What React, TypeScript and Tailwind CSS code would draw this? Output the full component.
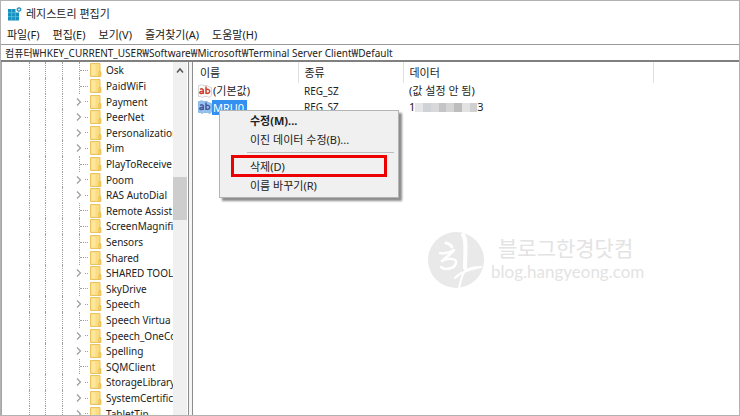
import clsx from 'clsx'

type TreeKey = { name: string; expandable?: boolean }

const TREE_KEYS: TreeKey[] = [
  { name: 'Osk' },
  { name: 'PaidWiFi' },
  { name: 'Payment', expandable: true },
  { name: 'PeerNet', expandable: true },
  { name: 'Personalization', expandable: true },
  { name: 'Pim', expandable: true },
  { name: 'PlayToReceive' },
  { name: 'Poom', expandable: true },
  { name: 'RAS AutoDial', expandable: true },
  { name: 'Remote Assist' },
  { name: 'ScreenMagnifi' },
  { name: 'Sensors' },
  { name: 'Shared' },
  { name: 'SHARED TOOL', expandable: true },
  { name: 'SkyDrive' },
  { name: 'Speech', expandable: true },
  { name: 'Speech Virtua' },
  { name: 'Speech_OneCo', expandable: true },
  { name: 'Spelling', expandable: true },
  { name: 'SQMClient' },
  { name: 'StorageLibrary', expandable: true },
  { name: 'SystemCertific', expandable: true },
  { name: 'TabletTip', expandable: true },
]

const MENUS = ['파일(F)', '편집(E)', '보기(V)', '즐겨찾기(A)', '도움말(H)']

const MASK_COLORS = [
  'bg-[#e4e6e8]',
  'bg-[#cfd2d6]',
  'bg-[#d8d8da]',
  'bg-[#c4c4c6]',
  'bg-[#d4d4d4]',
  'bg-[#bdbdbd]',
  'bg-[#e2e2e2]',
  'bg-[#d0d0d0]',
]

function AppIcon() {
  return (
    <svg width="14" height="14" viewBox="0 0 14 14" aria-hidden="true">
      <path d="M0 2h7.500v3.500h3.500V13.500H0z" fill="#1590bf" />
      <path d="M3.700 2v11.500M7.400 5.500v8M0 5.700h7.500M0 9.600h11" stroke="#63c5e4" strokeWidth="0.700" />
      <path d="M11 0l2.300 1.200v2.500L11 5 8.700 3.700V1.200z" fill="#2b8fb8" />
      <path d="M11 1.500l1.100.5v1.100l-1.100.6-1.100-.6V2z" fill="#b9e6f4" />
    </svg>
  )
}

function FolderIcon() {
  return (
    <svg width="12" height="14" viewBox="0 0 12 14" className="shrink-0" aria-hidden="true">
      <path d="M0.500 0.500h9.500v13H0.500z" fill="#fbdc80" stroke="#e9c45f" />
      <path d="M1.500 1.500h4v11h-4z" fill="#fee69c" />
      <path d="M9.500 8l1.500 1v4.500H8.800V9.500z" fill="#f7cf62" stroke="#dfb44a" strokeWidth="0.600" />
    </svg>
  )
}

function StringIcon({ selected }: { selected?: boolean }) {
  return (
    <svg width="14" height="14" viewBox="0 0 14 14" className="shrink-0" aria-hidden="true">
      <path
        d="M0.500 1.500h1.500l1.500-1 1.500 1h4l1.500 1 3 1v8.500l-1.500 1.500-2.500-1H5.500l-1.500 1-1.500-1h-2z"
        fill={selected ? '#94c3ef' : '#fbfbfb'}
        stroke={selected ? '#7fb0e0' : '#cbcbcb'}
        strokeWidth="0.800"
      />
      <g fill="none" stroke={selected ? '#4a5a9c' : '#cf4330'} strokeWidth="1.500">
        <path d="M2 5.300c1.600-.8 3.300-.5 3.300.9v3.700M5.300 7.200c-2.200 0-3.500.3-3.500 1.300 0 1.500 2.700 1.400 3.500 0" />
        <path d="M8 2.500v7.400M8 6.200c1.200-1.500 3.700-1.100 3.700 1.100s-2.500 2.700-3.700 1.300" />
      </g>
    </svg>
  )
}

function TreeRow({ name, expandable }: TreeKey) {
  return (
    <li className="flex h-4 shrink-0 nth-[5n+3]:h-[15px] nth-[5n]:h-[15px]">
      <span className="w-[17px] shrink-0 border-r border-dotted border-[#a0a0a0]" />
      <span className="w-4 shrink-0 border-r border-dotted border-[#a0a0a0]" />
      <span className="w-[17px] shrink-0 border-r border-dotted border-[#a0a0a0]" />
      {expandable ? (
        <span className="flex w-[26px] shrink-0 items-center justify-between pr-px pl-[13px]">
          <button type="button" aria-label={`${name} 확장`}>
            <svg width="6" height="8" viewBox="0 0 6 8" fill="none" stroke="#9c9c9c" strokeWidth="1.200">
              <path d="M1 0.500L4.500 4L1 7.500" />
            </svg>
          </button>
          <span className="w-[3px] border-t border-dotted border-[#a0a0a0]" />
        </span>
      ) : (
        <span className="flex w-[26px] shrink-0 items-center pl-4">
          <span className="self-stretch border-r border-dotted border-[#a0a0a0]" />
          <span className="w-2 border-t border-dotted border-[#a0a0a0]" />
        </span>
      )}
      <span className="flex min-w-0 flex-1 items-center gap-1 pl-px whitespace-nowrap">
        <FolderIcon />
        <span>{name}</span>
      </span>
    </li>
  )
}

function ContextMenu() {
  return (
    <div
      role="menu"
      className="absolute top-[11px] left-[26px] z-10 flex w-[180px] flex-col border border-[#b4b4b4] bg-[#f0f0f0] pb-0.5 text-[11px] shadow-[3px_3px_2px_rgba(0,0,0,0.45)]"
    >
      <MenuItem label="수정(M)..." bold />
      <MenuItem label="이진 데이터 수정(B)..." />
      <hr className="mt-[3px] mr-1 mb-1 ml-[27px] border-[#bdbdbd]" />
      <MenuItem label="삭제(D)" highlighted />
      <MenuItem label="이름 바꾸기(R)" />
    </div>
  )
}

function MenuItem({ label, bold, highlighted }: { label: string; bold?: boolean; highlighted?: boolean }) {
  return (
    <button
      type="button"
      role="menuitem"
      className={clsx('relative flex h-[19px] items-center pl-[30px] text-left', bold && 'font-bold')}
    >
      {label}
      {highlighted && (
        <span className="absolute -top-[2px] right-[11px] -bottom-px left-[11px] border-3 border-[#ec0000]" />
      )}
    </button>
  )
}

function Watermark() {
  return (
    <div className="pointer-events-none absolute top-[169px] left-[234px] flex items-center gap-[6px] text-[#e3e3e3]">
      <svg width="58" height="58" viewBox="0 0 58 58" aria-hidden="true">
        <circle cx="29" cy="29" r="28" fill="#e9e9e9" />
        <g fill="none" stroke="#fff" strokeLinecap="round" strokeLinejoin="round">
          <path d="M19 12c2 0 5 2 6 4" strokeWidth="3" />
          <path d="M13 22c5 1 11-1 14-3-2 4-9 7-12 11 5-3 14-3 14 1 0 6-10 9-15 5" strokeWidth="2.500" />
          <path d="M36 4c4 4 2 18 2 33" strokeWidth="4" />
          <path d="M28 47c5-6 16-9 26-11-8 0-12 1-16 4-3 3-4 8-6 17" strokeWidth="2" />
        </g>
      </svg>
      <div className="flex flex-col">
        <span className="pl-[7px] text-[21px] leading-6">블로그한경닷컴</span>
        <span className="font-['Lato','Noto_Sans_CJK_KR',sans-serif] text-[17px] leading-6">blog.hangyeong.com</span>
      </div>
    </div>
  )
}

export default function App() {
  return (
    <div className="flex h-screen flex-col overflow-hidden border border-[#b2b2b2] bg-white font-['Noto_Sans','Noto_Sans_CJK_KR',sans-serif] text-[11px] leading-4 text-[#222]">
      <header className="flex h-[25px] shrink-0 items-center gap-1 pl-[7px]">
        <AppIcon />
        <h1>레지스트리 편집기</h1>
      </header>

      <nav className="flex h-[18px] shrink-0 items-center gap-[13px] pl-[6px]">
        {MENUS.map((menu) => (
          <button key={menu} type="button">
            {menu}
          </button>
        ))}
      </nav>

      <input
        type="text"
        aria-label="주소"
        readOnly
        value="컴퓨터₩HKEY_CURRENT_USER₩Software₩Microsoft₩Terminal Server Client₩Default"
        className="h-[18px] shrink-0 border-t border-b-2 border-t-[#999] border-b-[#808080] pl-1 text-[10px] outline-none"
      />

      <div className="flex min-h-0 flex-1 bg-[#f5f5f5]">
        <aside className="flex w-[188px] shrink-0 border-r border-l border-r-[#8c8c8c] border-l-[#a5a5a5] bg-white">
          <ul className="min-w-0 flex-1 overflow-hidden pl-[11px] text-[10px]">
            {TREE_KEYS.map((key) => (
              <TreeRow key={key.name} {...key} />
            ))}
          </ul>
          <div className="flex w-[14px] shrink-0 flex-col items-center bg-[#f0f0f0]">
            <svg width="8" height="16" viewBox="0 0 8 16" fill="none" stroke="#555" strokeWidth="1.500" aria-hidden="true">
              <path d="M1 10.500L4 7L7 10.500" />
            </svg>
            <div className="mt-[99px] h-[43px] w-full bg-[#cdcdcd]" />
          </div>
          <div className="w-px" />
        </aside>

        <main className="relative ml-[3px] min-w-0 flex-1 border-l border-[#8c8c8c] bg-white">
          <table className="w-full table-fixed text-left">
            <thead>
              <tr className="h-[21px]">
                <th className="w-[105px] border-r border-[#e0e0e0] pl-[7px] font-normal">이름</th>
                <th className="w-[105px] border-r border-[#e0e0e0] pl-[6px] font-normal">종류</th>
                <th className="w-[250px] border-r border-[#e0e0e0] pl-[6px] font-normal">데이터</th>
                <td />
              </tr>
            </thead>
            <tbody>
              <tr className="h-4">
                <td className="p-0">
                  <div className="flex h-4 items-center gap-px pl-[5px]">
                    <StringIcon />
                    <span>(기본값)</span>
                  </div>
                </td>
                <td className="p-0 pl-[6px] text-[10px]">REG_SZ</td>
                <td className="p-0 pl-[6px]">(값 설정 안 됨)</td>
                <td />
              </tr>
              <tr className="h-4">
                <td className="p-0">
                  <div className="relative flex h-4 items-center pl-[5px]">
                    <StringIcon selected />
                    <span className="h-[15px] w-[35px] bg-[#3390f0] pl-px text-white">MRU0</span>
                    <ContextMenu />
                  </div>
                </td>
                <td className="p-0 pl-[6px] text-[10px]">REG_SZ</td>
                <td className="p-0 pl-[6px]">
                  <div className="flex items-center">
                    <span>1</span>
                    <span className="flex h-[9px] w-[62px]">
                      {MASK_COLORS.map((color) => (
                        <span key={color} className={clsx('flex-1', color)} />
                      ))}
                    </span>
                    <span>3</span>
                  </div>
                </td>
                <td />
              </tr>
            </tbody>
          </table>
          <Watermark />
        </main>
      </div>
    </div>
  )
}
